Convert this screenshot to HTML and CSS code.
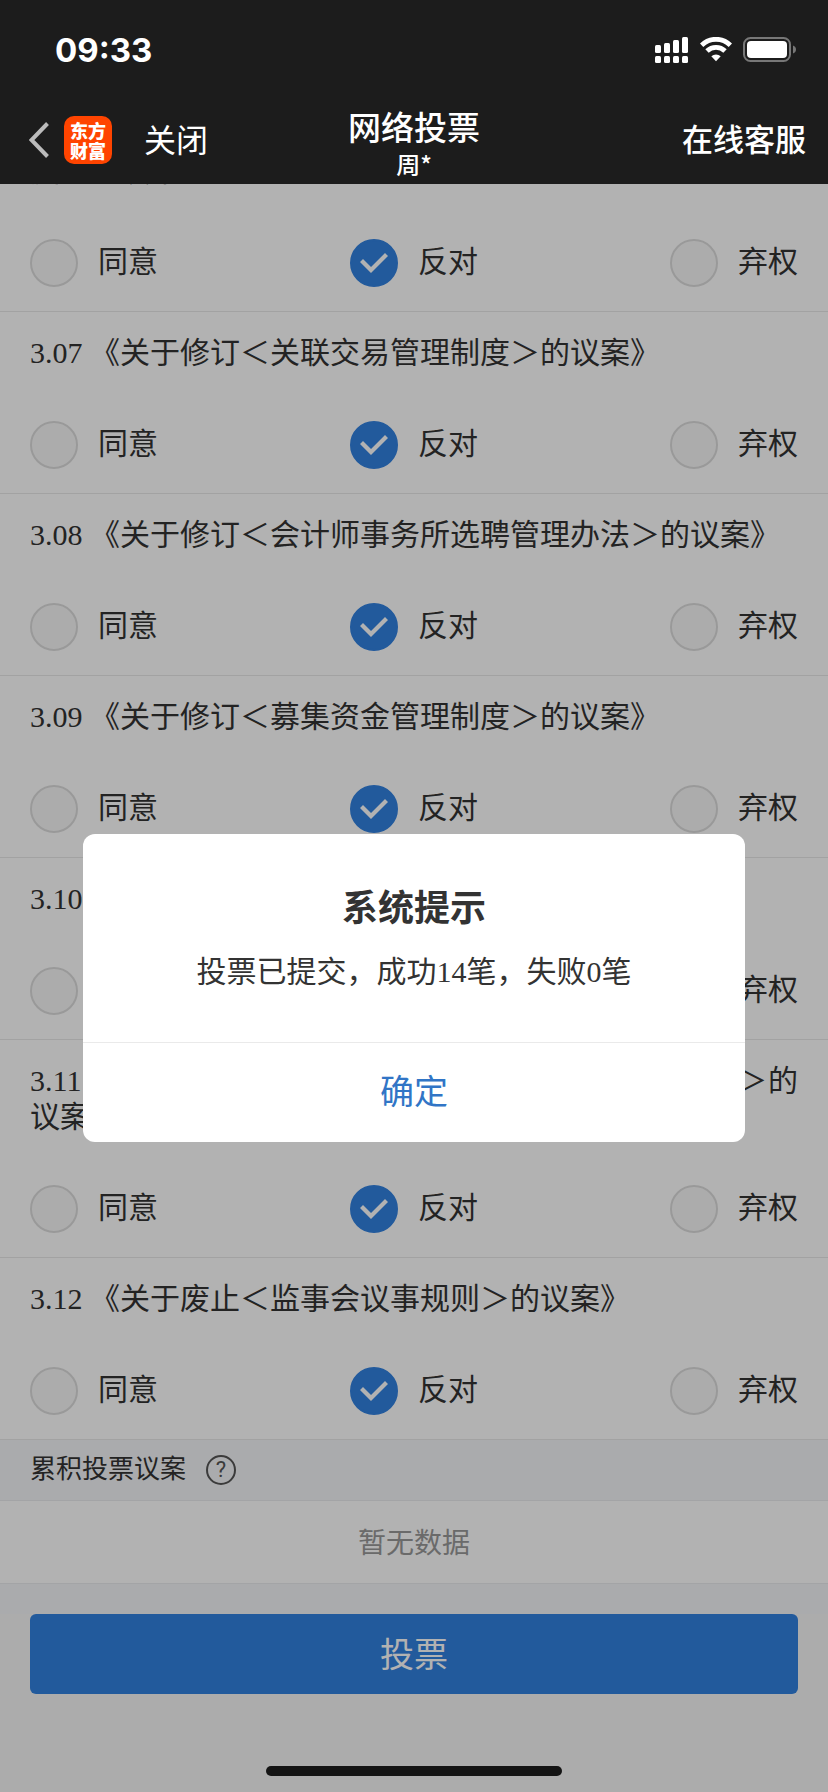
FILE: index.html
```html
<!DOCTYPE html>
<html lang="zh-CN">
<head>
<meta charset="utf-8">
<meta name="viewport" content="width=device-width, initial-scale=1">
<title>网络投票</title>
<link rel="stylesheet" href="styles.css">
</head>
<body>
<div class="app">
  <header class="header">
    <div class="status">
      <span class="time">09:33</span>
      <div class="status-icons">
        <svg width="34" height="26" viewBox="0 0 34 26" fill="#fff" aria-hidden="true">
          <rect x="0" y="8" width="6" height="8" rx="1.5"/><rect x="9" y="6" width="6" height="10" rx="1.5"/><rect x="18" y="3" width="6" height="13" rx="1.5"/><rect x="27" y="0" width="6" height="16" rx="1.5"/>
          <rect x="0" y="19" width="6" height="7" rx="1.5"/><rect x="9" y="19" width="6" height="7" rx="1.5"/><rect x="18" y="19" width="6" height="7" rx="1.5"/><rect x="27" y="19" width="6" height="7" rx="1.5"/>
        </svg>
        <svg width="32" height="26" viewBox="0 0 32 26" aria-hidden="true">
          <path d="M1.600 8.200a20.400 20.400 0 0 1 28.800 0M7 14a12.800 12.800 0 0 1 18 0" fill="none" stroke="#fff" stroke-width="4.800"/>
          <path d="M11.300 19.200a7 7 0 0 1 9.400 0L16 24.200z" fill="#fff"/>
        </svg>
        <svg width="53" height="26" viewBox="0 0 53 26" aria-hidden="true">
          <rect x="1" y="1" width="46" height="23" rx="6.5" fill="none" stroke="#777" stroke-width="2"/>
          <rect x="4" y="4" width="40" height="17" rx="4" fill="#fff"/>
          <path d="M50 8.5q3 1.200 3 4t-3 4z" fill="#777"/>
        </svg>
      </div>
    </div>
    <nav class="navbar">
      <div class="nav-left">
        <button class="back" type="button" aria-label="返回">
          <svg width="20" height="36" viewBox="0 0 20 36" aria-hidden="true"><path d="M18.500 1.500L2.500 18l16 16.500" fill="none" stroke="#bbb" stroke-width="4"/></svg>
        </button>
        <span class="logo"><span>东方</span><span>财富</span></span>
        <button class="nav-text" type="button">关闭</button>
      </div>
      <div class="nav-title">
        <h1>网络投票</h1>
        <p>周*</p>
      </div>
      <button class="nav-text service" type="button">在线客服</button>
    </nav>
  </header>

  <div class="view">
    <main class="scroll">
      <fieldset class="item">
        <legend>度＞的议案》</legend>
        <div class="options">
          <label><input type="radio" name="v306"><span>同意</span></label>
          <label><input type="radio" name="v306" checked><span>反对</span></label>
          <label><input type="radio" name="v306"><span>弃权</span></label>
        </div>
      </fieldset>
      <fieldset class="item">
        <legend>3.07 《关于修订＜关联交易管理制度＞的议案》</legend>
        <div class="options">
          <label><input type="radio" name="v307"><span>同意</span></label>
          <label><input type="radio" name="v307" checked><span>反对</span></label>
          <label><input type="radio" name="v307"><span>弃权</span></label>
        </div>
      </fieldset>
      <fieldset class="item">
        <legend>3.08 《关于修订＜会计师事务所选聘管理办法＞的议案》</legend>
        <div class="options">
          <label><input type="radio" name="v308"><span>同意</span></label>
          <label><input type="radio" name="v308" checked><span>反对</span></label>
          <label><input type="radio" name="v308"><span>弃权</span></label>
        </div>
      </fieldset>
      <fieldset class="item">
        <legend>3.09 《关于修订＜募集资金管理制度＞的议案》</legend>
        <div class="options">
          <label><input type="radio" name="v309"><span>同意</span></label>
          <label><input type="radio" name="v309" checked><span>反对</span></label>
          <label><input type="radio" name="v309"><span>弃权</span></label>
        </div>
      </fieldset>
      <fieldset class="item">
        <legend>3.10 《关于修订＜信息披露制度＞的议案》</legend>
        <div class="options">
          <label><input type="radio" name="v310"><span>同意</span></label>
          <label><input type="radio" name="v310" checked><span>反对</span></label>
          <label><input type="radio" name="v310"><span>弃权</span></label>
        </div>
      </fieldset>
      <fieldset class="item">
        <legend>3.11 《关于修订＜董事和高级管理人员薪酬管理制度＞的议案》</legend>
        <div class="options">
          <label><input type="radio" name="v311"><span>同意</span></label>
          <label><input type="radio" name="v311" checked><span>反对</span></label>
          <label><input type="radio" name="v311"><span>弃权</span></label>
        </div>
      </fieldset>
      <fieldset class="item">
        <legend>3.12 《关于废止＜监事会议事规则＞的议案》</legend>
        <div class="options">
          <label><input type="radio" name="v312"><span>同意</span></label>
          <label><input type="radio" name="v312" checked><span>反对</span></label>
          <label><input type="radio" name="v312"><span>弃权</span></label>
        </div>
      </fieldset>
      <div class="section">
        <h2>累积投票议案</h2>
        <button class="help" type="button" aria-label="帮助">?</button>
      </div>
      <p class="empty">暂无数据</p>
    </main>
    <footer class="footer">
      <button class="submit" type="button">投票</button>
    </footer>
    <div class="overlay">
      <div class="dialog" role="alertdialog" aria-labelledby="dlg-title" aria-describedby="dlg-text">
        <div class="dialog-body">
          <h2 id="dlg-title">系统提示</h2>
          <p id="dlg-text">投票已提交，成功14笔，失败0笔</p>
        </div>
        <button class="confirm" type="button">确定</button>
      </div>
    </div>
    <div class="home-bar"></div>
  </div>
</div>
</body>
</html>
```
FILE: styles.css
```css
* {
  box-sizing: border-box;
}

body,
h1,
h2,
p,
fieldset {
  margin: 0;
}

body {
  background: #f7f7f7;
  color: #333;
  font-family: "Liberation Serif", "Noto Sans CJK SC", serif;
  font-size: 30px;
  line-height: 36px;
}

button {
  padding: 0;
  border: 0;
  background: none;
  color: inherit;
  font: inherit;
}

svg {
  display: block;
}

.app {
  display: flex;
  flex-direction: column;
  height: 100vh;
}

.header {
  background: #1c1c1c;
  color: #fff;
  font-family: "Noto Sans CJK SC", sans-serif;
}

.status {
  display: flex;
  align-items: center;
  justify-content: space-between;
  height: 100px;
  padding: 0 32px 0 55px;
}

.time {
  font: 700 33px/40px Inter, sans-serif;
}

.status-icons {
  display: flex;
  gap: 11px;
}

.navbar {
  display: grid;
  grid-template-columns: 1fr auto 1fr;
  height: 84px;
  padding: 0 22px;
}

.nav-left {
  display: flex;
  align-items: center;
  height: 80px;
  padding-left: 7px;
}

.logo {
  display: flex;
  flex-direction: column;
  justify-content: center;
  width: 48px;
  height: 48px;
  margin: 0 32px 0 15px;
  border-radius: 10px;
  background: #ff4400;
  font-size: 18px;
  font-weight: 900;
  line-height: 20px;
  text-align: center;
}

.nav-text {
  height: 80px;
  padding-bottom: 4px;
  font-size: 32px;
}

.service {
  justify-self: end;
  font-size: 31px;
  font-weight: 500;
}

.nav-title {
  padding-top: 6px;
  text-align: center;
}

.nav-title h1 {
  font-size: 33px;
  font-weight: 500;
  line-height: 40px;
}

.nav-title p {
  font-size: 24px;
  font-weight: 500;
  line-height: 36px;
}

.view {
  position: relative;
  display: flex;
  flex: 1;
  flex-direction: column;
  min-height: 0;
}

.scroll {
  display: flex;
  flex: 1;
  flex-direction: column;
  justify-content: flex-end;
  min-height: 0;
  padding-bottom: 30px;
  overflow: hidden;
  background: #f4f5f8;
}

.item {
  flex: none;
  min-width: 0;
  padding: 23px 30px 24px;
  border: 0;
  border-bottom: 1px solid #e8e8e8;
  background: #fff;
}

.item legend {
  float: left;
  width: 100%;
  margin-bottom: 50px;
  padding: 0;
  text-align: justify;
}

.options {
  display: flex;
  clear: both;
  justify-content: space-between;
}

.options label {
  display: flex;
  align-items: center;
  gap: 20px;
  height: 48px;
}

.options span {
  padding-bottom: 2px;
}

.options input {
  width: 48px;
  height: 48px;
  margin: 0;
  appearance: none;
  border: 2px solid #dcdcdc;
  border-radius: 50%;
  background: #f7f7f7;
}

.options input:checked {
  display: grid;
  place-items: center;
  border-color: #3181e0;
  background: #3181e0;
}

.options input:checked::before {
  content: "";
  width: 28px;
  height: 20px;
  background: #fff;
  clip-path: polygon(0 9px, 3px 6px, 11px 14px, 25px 0, 28px 3px, 11px 20px);
}

.section {
  display: flex;
  flex: none;
  align-items: center;
  gap: 20px;
  height: 61px;
  padding: 0 30px;
  border-bottom: 1px solid #eaebee;
}

.section h2 {
  font-size: 26px;
  font-weight: 400;
}

.help {
  width: 30px;
  height: 30px;
  border: 2px solid #555;
  border-radius: 50%;
  color: #555;
  font: 22px/26px Roboto, sans-serif;
}

.empty {
  flex: none;
  padding: 25px 30px 21px;
  border-bottom: 1px solid #eaebee;
  background: #fff;
  color: #999;
  font-size: 28px;
  text-align: center;
}

.footer {
  flex: none;
  height: 178px;
  padding: 0 30px;
  background: #f7f7f7;
}

.submit {
  width: 100%;
  height: 80px;
  padding-top: 4px;
  border-radius: 6px;
  background: #3181e0;
  color: #fff;
  font-size: 34px;
}

.overlay {
  position: absolute;
  inset: 0;
  display: flex;
  align-items: center;
  justify-content: center;
  background: rgba(0, 0, 0, 0.3);
}

.dialog {
  width: 80%;
  overflow: hidden;
  border-radius: 12px;
  background: #fff;
  text-align: center;
}

.dialog-body {
  padding: 51px 30px 48px;
  border-bottom: 1px solid #eaeaea;
}

.dialog-body h2 {
  margin-bottom: 17px;
  font-size: 36px;
  line-height: 48px;
}

.dialog-body p {
  line-height: 44px;
}

.confirm {
  display: block;
  width: 100%;
  height: 99px;
  padding-top: 1px;
  color: #3175c6;
  font-size: 34px;
}

.home-bar {
  position: absolute;
  bottom: 16px;
  left: 50%;
  width: 296px;
  height: 10px;
  margin-left: -148px;
  border-radius: 5px;
  background: #141414;
}
```
